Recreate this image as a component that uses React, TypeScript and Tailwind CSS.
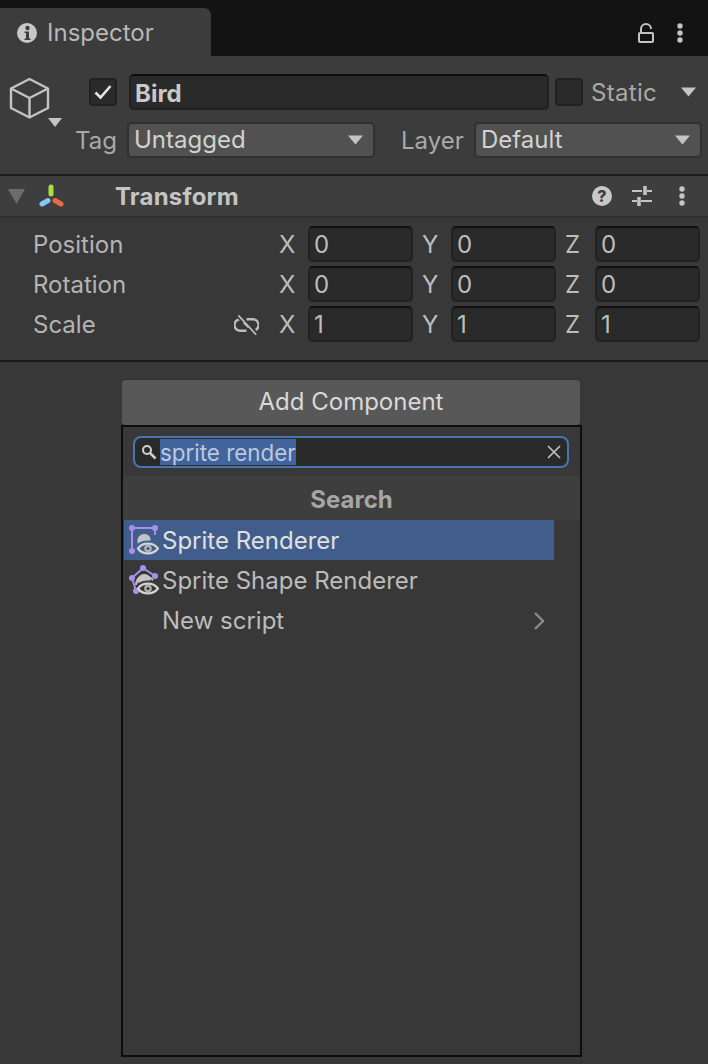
import React from "react";

function Caret({ className = "" }: { className?: string }) {
  return (
    <svg width="15" height="10" viewBox="0 0 15 10" className={className}>
      <path d="M0 0.5H15L7.5 9.5Z" fill="#c4c4c4" />
    </svg>
  );
}

function Dots({ fill = "#c4c4c4" }: { fill?: string }) {
  return (
    <svg width="6" height="20" viewBox="0 0 6 20">
      <circle cx="3" cy="3" r="2.7" fill={fill} />
      <circle cx="3" cy="10" r="2.7" fill={fill} />
      <circle cx="3" cy="17" r="2.7" fill={fill} />
    </svg>
  );
}

function Dropdown({ label, className }: { label: string; className: string }) {
  return (
    <div className={`flex h-[36px] items-center justify-between rounded-[5px] border-2 border-[#303030] bg-[#515151] pl-[5px] pr-[10px] text-[#d2d2d2] ${className}`}>
      <span className="leading-none">{label}</span>
      <Caret />
    </div>
  );
}

function Field({ axis, value, wide }: { axis: string; value: string; wide?: boolean }) {
  return (
    <div className="flex items-center">
      <span className={`${wide ? "w-[30px]" : "w-[29px]"} pt-[2px] text-[24px] leading-none text-[#bdbdbd]`}>{axis}</span>
      <div className="flex h-[36px] w-[105px] items-center rounded-[5px] border-2 border-[#212121] border-t-[#0f0f0f] bg-[#2a2a2a] pl-[4px] pt-[2px] text-[#bdbdbd]">
        {value}
      </div>
    </div>
  );
}

function TransformRow({ label, values, link }: { label: string; values: string[]; link?: boolean }) {
  const axes = ["X", "Y", "Z"];
  return (
    <div className="flex h-[36px] items-center">
      <span className="ml-[33px] w-[201px] pt-[2px] text-[#b4b4b4]">{label}</span>
      <span className="flex w-[45px] items-center">
        {link && (
          <svg width="25" height="22" viewBox="0 0 26 22" fill="none" stroke="#bdbdbd" strokeWidth="2.4" className="mt-[2px]">
            <path d="M7 5H6.500a6 6 0 0 0 0 12H13" />
            <path d="M13 5H19.500a6 6 0 0 1 3 11.200" />
            <path d="M4 1 23 21" stroke="#383838" strokeWidth="4.500" />
            <path d="M4.500 1 23 21" strokeWidth="1.800" />
            <path d="M10 8.500 15 13.500" strokeWidth="1.800" />
          </svg>
        )}
      </span>
      <div className="flex gap-[9px]">
        {values.map((v, i) => (
          <Field key={i} axis={axes[i]} value={v} wide={i === 2} />
        ))}
      </div>
    </div>
  );
}

function SpriteEye({ bg }: { bg: string }) {
  return (
    <>
      <path d="M8.500 19.500C7.500 13.500 11 10 15 10s7 2.500 6.500 6.500C17 16 12 17 8.500 19.500Z" fill="#c4c4c4" />
      <path d="M9 24.500C13.500 18 24 18 29 24.500 24 31 13.500 31 9 24.500Z" fill={bg} stroke="#d4d4d4" strokeWidth="2.200" />
      <circle cx="19" cy="24.500" r="3.800" fill="#b4b4b4" />
      <circle cx="19" cy="24.500" r="1.600" fill={bg} />
    </>
  );
}

export default function App() {
  return (
    <div className="flex h-[1064px] w-[708px] flex-col overflow-hidden bg-[#383838] text-[24px] leading-none [font-family:Inter,'Liberation_Sans',sans-serif]">
      {/* Tab bar */}
      <div className="flex h-[56px] shrink-0 items-end justify-between bg-[#131313]">
        <div className="flex h-[48px] w-[211px] items-center rounded-tr-[7px] bg-[#3c3c3c] pl-[17px] pt-[2px] text-[#b8b8b8]">
          <svg width="20" height="20" viewBox="0 0 20 20" className="mr-[10px]">
            <circle cx="10" cy="10" r="10" fill="#c8c8c8" />
            <circle cx="10.500" cy="5" r="2.200" fill="#3c3c3c" />
            <path d="M7.500 8.500h4.500v7h1.500v1.500h-6v-1.500h1.500v-5.500h-1.500z" fill="#3c3c3c" />
          </svg>
          <span>Inspector</span>
        </div>
        <div className="mb-[13px] mr-[25px] flex items-center gap-[23px]">
          <svg width="16" height="20" viewBox="0 0 16 20" fill="none" stroke="#c4c4c4" strokeWidth="2">
            <path d="M3 9V6a5 5 0 0 1 10 0" />
            <rect x="1" y="10" width="14" height="9" rx="1" />
          </svg>
          <Dots />
        </div>
      </div>

      {/* Object header */}
      <div className="h-[120px] shrink-0 border-b-2 border-[#1b1b1b] bg-[#3c3c3c] pt-[18px]">
        <div className="flex h-[36px] items-center">
          <svg width="62" height="50" viewBox="0 0 62 50" fill="none" stroke="#c4c4c4" strokeWidth="2.400" strokeLinejoin="round" className="ml-[2px] mt-[26px] mr-[25px] shrink-0 -translate-y-[3px]">
            <path d="M27.500 2 46 11.500V31L27.500 40.500 9 31V11.500Z" />
            <path d="M9 11.500 27.500 21 46 11.500M27.500 21V40.500" />
            <path d="M46 41H60L53 50Z" fill="#c4c4c4" stroke="none" />
          </svg>
          <div className="flex h-[28px] w-[28px] items-center justify-center rounded-[4px] border-2 border-[#212121] bg-[#2a2a2a]">
            <svg width="18" height="16" viewBox="0 0 18 16" fill="none" stroke="#e4e4e4" strokeWidth="2.600">
              <path d="M1.500 8.500 6.500 13.500 16.500 2" />
            </svg>
          </div>
          <div className="ml-[12px] flex h-[36px] w-[420px] items-center rounded-[5px] border-2 border-[#212121] border-t-[#0f0f0f] bg-[#2a2a2a] pl-[4px] pt-[3px] font-bold text-[#c8c8c8]">Bird</div>
          <div className="ml-[6px] h-[28px] w-[28px] rounded-[4px] border-2 border-[#212121] bg-[#2a2a2a]" />
          <span className="ml-[8px] pt-[2px] text-[#a9a9a9] tracking-[0.3px]">Static</span>
          <Caret className="ml-[24px]" />
        </div>
        <div className="mt-[12px] flex h-[36px] items-center">
          <span className="ml-[75px] w-[52px] pt-[1px] text-[#a9a9a9]">Tag</span>
          <Dropdown label="Untagged" className="w-[248px]" />
          <span className="ml-[26px] w-[73px] pt-[1px] text-[#a9a9a9]">Layer</span>
          <Dropdown label="Default" className="w-[228px]" />
        </div>
      </div>

      {/* Transform header */}
      <div className="flex h-[42px] shrink-0 items-center border-b-2 border-[#2f2f2f] bg-[#3e3e3e]">
        <svg width="17" height="15" viewBox="0 0 17 15" className="ml-[8px] shrink-0">
          <path d="M0 0H17L8.500 15Z" fill="#6c6c6c" />
        </svg>
        <svg width="28" height="26" viewBox="0 0 28 26" fill="none" strokeWidth="5" strokeLinecap="round" className="ml-[13px] shrink-0">
          <path d="M13 4V11" stroke="#a6e23e" />
          <path d="M4 21 10 17.500" stroke="#80c8f8" />
          <path d="M17 17.500 23 21" stroke="#ea6a3e" />
        </svg>
        <span className="ml-[49px] pt-[2px] font-bold tracking-[0.2px] text-[#c4c4c4]">Transform</span>
        <div className="ml-auto mr-[23px] flex items-center">
          <svg width="20" height="20" viewBox="0 0 20 20" className="mr-[20px]">
            <circle cx="10" cy="10" r="10" fill="#c8c8c8" />
            <text x="10" y="16" textAnchor="middle" fontSize="16" fontWeight="800" fill="#3e3e3e" fontFamily="Inter">?</text>
          </svg>
          <svg width="20" height="20" viewBox="0 0 20 20" fill="none" stroke="#c4c4c4" strokeWidth="2" className="mr-[27px]">
            <path d="M0 5H10M15 5H20M0 15H5M9 15H20" />
            <path d="M13 0V9M7 11V20" strokeWidth="3.500" />
          </svg>
          <Dots />
        </div>
      </div>

      {/* Transform rows */}
      <div className="flex h-[144px] shrink-0 flex-col gap-[4px] border-b-2 border-[#1b1b1b] pt-[8px]">
        <TransformRow label="Position" values={["0", "0", "0"]} />
        <TransformRow label="Rotation" values={["0", "0", "0"]} />
        <TransformRow label="Scale" values={["1", "1", "1"]} link />
      </div>

      {/* Add component */}
      <div className="flex min-h-0 grow flex-col items-start pl-[121px] pt-[17px]">
        <div className="ml-[1px] flex h-[46px] w-[458px] items-center justify-center rounded-[4px] border-t border-[#303030] bg-[#585858] pb-[2px] text-[#d8d8d8]">
          Add Component
        </div>
        <div className="flex h-[632px] w-[461px] flex-col border-2 border-[#0d0d0d] bg-[#383838]">
          <div className="h-[49px] pl-[10px] pr-[11px] pt-[9px]">
            <div className="flex h-[32px] items-center rounded-[8px] border-2 border-[#4a74ae] bg-[#2a2a2a] pl-[6px] pr-[5px]">
              <svg width="16" height="16" viewBox="0 0 16 16" fill="none" stroke="#d0d0d0" className="shrink-0">
                <circle cx="6" cy="6" r="4" strokeWidth="2" />
                <path d="M9 9 14.500 14.500" strokeWidth="2.500" />
              </svg>
              <span className="ml-[3px] bg-[#41649c] pt-[2px] text-[22.4px] leading-[24px] text-[#bcc9dc]">sprite render</span>
              <svg width="14" height="14" viewBox="0 0 14 14" fill="none" stroke="#c4c4c4" strokeWidth="1.600" className="ml-auto mr-[1px] shrink-0">
                <path d="M1 1 13 13M13 1 1 13" />
              </svg>
            </div>
          </div>
          <div className="flex h-[44px] items-center justify-center bg-[#3e3e3e] pt-[3px] font-bold text-[#a6a6a6]">Search</div>
          <div className="flex flex-col pl-[1px]">
            <div className="flex h-[40px] w-[430px] items-center bg-[#415d8b] pl-[5px] pt-[1px] text-[#e0e0e0]">
              <svg width="30" height="32" viewBox="0 0 30 32" fill="none" className="mr-[3px] -mt-[1px] shrink-0">
                <path d="M3 4H26V11M3 4V27" stroke="#a78fea" strokeWidth="2" />
                <circle cx="3" cy="4" r="3" fill="#a78fea" />
                <circle cx="26" cy="4" r="3" fill="#a78fea" />
                <circle cx="3" cy="27" r="3" fill="#a78fea" />
                <SpriteEye bg="#415d8b" />
              </svg>
              Sprite Renderer
            </div>
            <div className="flex h-[40px] w-[430px] items-center pl-[5px] pt-[1px] text-[#bcbcbc]">
              <svg width="30" height="32" viewBox="0 0 30 32" fill="none" className="mr-[3px] -mt-[1px] shrink-0">
                <path d="M14 4 3 14 7 27M14 4 26 12" stroke="#a78fea" strokeWidth="2" />
                <circle cx="14" cy="4" r="3" fill="#a78fea" />
                <circle cx="3" cy="14" r="3" fill="#a78fea" />
                <circle cx="7" cy="27" r="3" fill="#a78fea" />
                <circle cx="26" cy="12" r="3" fill="#a78fea" />
                <path d="M7 21C7 12 17 9 24 16" stroke="#c4c4c4" strokeWidth="1.800" />
                <SpriteEye bg="#383838" />
              </svg>
              Sprite Shape Renderer
            </div>
            <div className="flex h-[40px] w-[430px] items-center pl-[38px] pr-[10px] pt-[1px] text-[#bcbcbc]">
              New script
              <svg width="10" height="18" viewBox="0 0 10 18" fill="none" stroke="#8a8a8a" strokeWidth="2.400" className="ml-auto">
                <path d="M1 1 9 9 1 17" />
              </svg>
            </div>
          </div>
        </div>
      </div>
    </div>
  );
}
